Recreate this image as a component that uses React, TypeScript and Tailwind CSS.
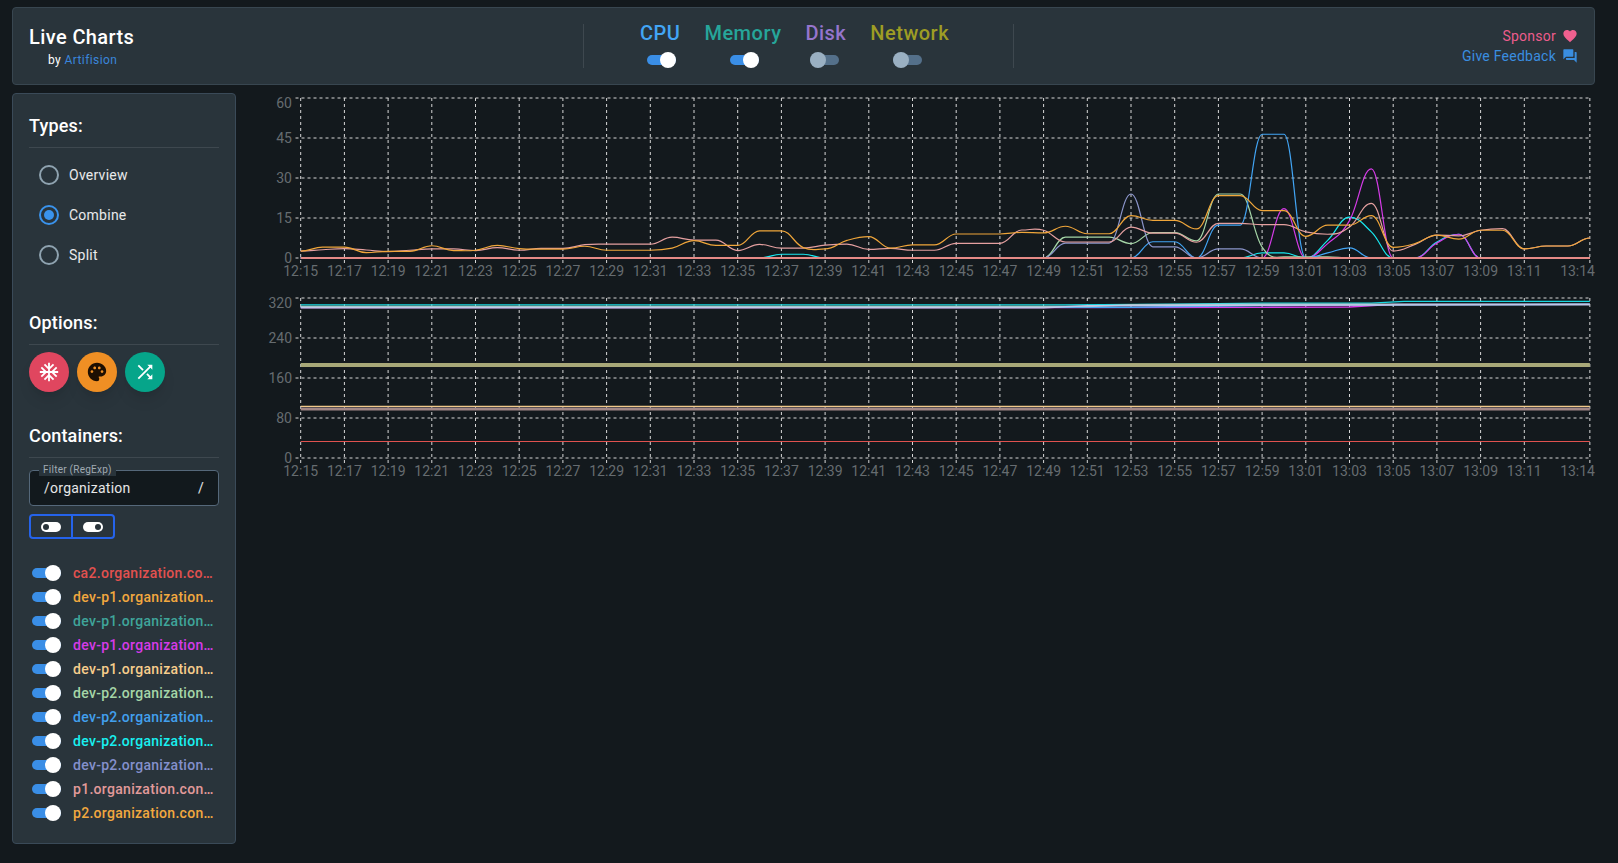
import { MdAcUnit, MdFavorite, MdForum, MdPalette, MdShuffle } from "react-icons/md"

const font = { fontFamily: "Roboto, sans-serif" }

const sparse = (points: Record<number, number>) => Array.from({ length: 60 }, (_, m) => points[m] ?? 0)

const orange = [2.6,4.1,4.1,2,2.5,2.5,4.6,2.8,2.9,4.7,3.5,3.3,3.3,4.4,2.9,2.9,2.9,3.7,6.5,4.7,4.7,10.2,10.2,3.9,3.4,6.6,8,3.7,4.9,4.9,9,9,9,9.6,9.4,11.9,9.1,9.1,15.9,14.1,14.1,10.9,23.4,23.4,17.8,17.8,8.1,12.3,12.3,15.9,4,5.4,8.6,7.1,10.4,10.4,3.4,4.5,4.5,7.5]
const pink = [2.6,3.1,3.5,3,2.4,2.9,3.4,3.4,2.8,3.9,2.9,3.6,3.6,5,5.2,5.2,5.2,7.8,6.7,6.7,2.8,5.1,3.7,3.7,4.8,5.2,3.2,3.6,2.9,2.9,5.5,5.5,5.5,10.5,10.4,6,6,6,11.6,9.3,9.3,5.9,13,13,12.5,12.5,9.8,8.9,11.6,20.5,2.6,5.1,8.6,8.3,10.4,11,3.4,4.5,4.5,7.5]

const cpuSeries = [
  { color: "#18e8f0", data: sparse({ 22: 1.4, 23: 1.4, 44: 1.9, 45: 1.9, 47: 6.6, 48: 15.3, 49: 9.8, 52: 6, 53: 8.9 }) },
  { color: "#d63be8", data: sparse({ 45: 18.5, 47: 5.4, 48: 14, 49: 33.4, 52: 5.6, 53: 8.9 }) },
  { color: "#a5d6a7", data: sparse({ 35: 7.8, 36: 7.8, 37: 7.8, 38: 5.4, 39: 9.5, 40: 9.5, 41: 6.4, 42: 24, 43: 24, 44: 4.1, 45: 0.4, 46: 0.4, 47: 0.4 }) },
  { color: "#42a5f5", data: sparse({ 39: 6.1, 40: 6.1, 42: 12.3, 43: 12.3, 44: 46.4, 45: 46.4, 47: 1.9, 48: 3.8 }) },
  { color: "#8c96cc", data: sparse({ 35: 5.6, 36: 5.6, 37: 5.6, 38: 24, 39: 4.2, 40: 4.2, 42: 3.4, 43: 3.4 }) },
  { color: "#e5a0a0", data: pink },
  { color: "#f0a63a", data: orange },
]

// local x inside the chart svg (which starts at page x 260)
const xOf = (m: number) => 40.7 + m * 21.85

// monotone-ish smoothing, flat tangent at peaks so plateaus stay flat
const smoothPath = (pts: number[][]) => {
  const tangent = pts.map((p, i) => {
    if (i === 0 || i === pts.length - 1) return 0
    const a = p[1] - pts[i - 1][1]
    const b = pts[i + 1][1] - p[1]
    if (a * b <= 0) return 0
    return ((a + b) / 2) / (pts[i + 1][0] - pts[i - 1][0]) * 2
  })
  let d = `M${pts[0][0]} ${pts[0][1]}`
  for (let i = 1; i < pts.length; i++) {
    const h = (pts[i][0] - pts[i - 1][0]) / 2.4
    d += `C${pts[i - 1][0] + h} ${pts[i - 1][1] + tangent[i - 1] * h} ${pts[i][0] - h} ${pts[i][1] - tangent[i] * h} ${pts[i][0]} ${pts[i][1]}`
  }
  return d
}

const timeLabel = (m: number) => {
  const t = 12 * 60 + 15 + m
  return `${Math.floor(t / 60)}:${String(t % 60).padStart(2, "0")}`
}

const Chart = ({ top, height, yLabels, children }: { top: number; height: number; yLabels: string[]; children: React.ReactNode }) => {
  const minutes = Array.from({ length: 29 }, (_, i) => i * 2)
  return (
    <svg width={1358} height={height} className="block" style={font}>
      {yLabels.map((label, i) => {
        const y = top + i * 40
        return (
          <g key={label}>
            <line x1={35.5} x2={1330} y1={y} y2={y} stroke="#d8d8d8" strokeDasharray="3 3" />
            <text x={32} y={y + (i === 0 ? 10 : 5)} textAnchor="end" fontSize={14} fill="#666c70">{label}</text>
          </g>
        )
      })}
      {[...minutes, 59].map(m => (
        <g key={m}>
          <line x1={xOf(m)} x2={xOf(m)} y1={top} y2={top + 165} stroke="#d8d8d8" strokeDasharray="3 3" />
          <text x={m === 59 ? 1335 : xOf(m)} y={top + 178} textAnchor={m === 59 ? "end" : "middle"} fontSize={14} fill="#666c70">{timeLabel(m)}</text>
        </g>
      ))}
      {children}
    </svg>
  )
}

const CpuChart = () => (
  <Chart top={4} height={191} yLabels={["60", "45", "30", "15", "0"]}>
    {cpuSeries.map(s => (
      <path key={s.color} d={smoothPath(s.data.map((v, m) => [xOf(m), 164 - v * 2.667]))} fill="none" stroke={s.color} strokeWidth={1.2} />
    ))}
    <line x1={xOf(0)} x2={1330} y1={164} y2={164} stroke="#e58a86" strokeWidth={2} />
  </Chart>
)

const memoryLines = [
  { color: "#a08686", width: 3, pts: [[0, 124], [59, 124]] },
  { color: "#f0c98a", width: 1.3, pts: [[0, 121.3], [59, 121.3]] },
  { color: "#a8a878", width: 4, pts: [[0, 80], [59, 80]] },
  { color: "#e0524f", width: 1, pts: [[0, 156.5], [59, 156.5]] },
  { color: "#d63be8", width: 1.3, pts: [[0, 22.6], [36, 22.6], [44, 22.3], [48, 22], [50, 19.3], [59, 19.3]] },
  { color: "#42a5f5", width: 1.5, pts: [[0, 22.2], [38, 22.2], [44, 20.6], [49, 19.8], [59, 19.3]] },
  { color: "#18d8e0", width: 1.3, pts: [[0, 19.8], [35, 19.8], [40, 19.2], [44, 18.2], [49, 18.2], [50.5, 16.3], [59, 16.3]] },
  { color: "#a5c8c8", width: 1.5, pts: [[0, 21.5], [36, 21.5], [38, 19.8], [44, 19.2], [50, 19.3], [59, 19.3]] },
  { color: "#c0c6e8", width: 1.6, pts: [[0, 22.7], [34, 22.7], [36, 20.8], [50, 20], [59, 19.6]] },
]

const MemoryChart = () => (
  <Chart top={13} height={200} yLabels={["320", "240", "160", "80", "0"]}>
    {memoryLines.map(l => (
      <polyline key={l.color} points={l.pts.map(p => `${xOf(p[0])},${p[1]}`).join(" ")} fill="none" stroke={l.color} strokeWidth={l.width} />
    ))}
  </Chart>
)

const Toggle = ({ on }: { on: boolean }) => (
  <div className={`relative w-[29px] h-[10px] rounded-full ${on ? "bg-[#3a8ee6]" : "bg-[#54708a]"}`}>
    <div className={`absolute top-[-3px] w-4 h-4 rounded-full ${on ? "left-[13px] bg-white" : "left-0 bg-[#9ab0c2]"}`} />
  </div>
)

const Metric = ({ label, color, on, nudge }: { label: string; color: string; on: boolean; nudge: string }) => (
  <div className="flex flex-col items-center">
    <span className={`text-[20px] leading-7 font-medium tracking-[0.5px] ${color}`}>{label}</span>
    <div className={`mt-2 ${nudge}`}>
      <Toggle on={on} />
    </div>
  </div>
)

const Header = () => (
  <header className="flex items-center w-[1583px] h-[78px] pl-4 pr-4 bg-[#29343b] border border-[#384650] rounded">
    <div className="w-[554px] pb-px">
      <div className="mb-px text-[20px] leading-7 font-medium tracking-[0.4px] text-white">Live Charts</div>
      <div className="ml-[19px] text-xs leading-4 tracking-[0.4px] text-white">by <span className="text-[#3a86dc]">Artifision</span></div>
    </div>
    <div className="w-px h-11 bg-white/10" />
    <div className="flex gap-6 w-[429px] h-full pl-[56px] pt-[11px]">
      <Metric label="CPU" color="text-[#42a5f5]" on nudge="ml-[2px]" />
      <Metric label="Memory" color="text-[#26a69a]" on nudge="ml-[4px]" />
      <Metric label="Disk" color="text-[#9575cd]" on={false} nudge="mr-[2px]" />
      <Metric label="Network" color="text-[#9e9d24]" on={false} nudge="mr-[4px]" />
    </div>
    <div className="w-px h-11 bg-white/10" />
    <div className="flex-1 text-sm leading-5 tracking-[0.25px] text-right">
      <div className="flex items-center justify-end gap-[6px] text-[#ec5c8c]">Sponsor<MdFavorite size={16} className="text-[#f0608f]" /></div>
      <div className="flex items-center justify-end gap-[6px] text-[#3a8ee0]">Give Feedback<MdForum size={16} /></div>
    </div>
  </header>
)

const SectionTitle = ({ children, className }: { children: string; className?: string }) => (
  <div className={className}>
    <div className="text-[18px] leading-6 font-medium tracking-[0.15px] text-white">{children}</div>
    <div className="h-px mt-[9px] bg-white/10" />
  </div>
)

const Radio = ({ label, checked }: { label: string; checked?: boolean }) => (
  <div className="flex items-center h-10 pl-[10px] gap-[10px]">
    <div className={`flex items-center justify-center w-5 h-5 rounded-full border-2 ${checked ? "border-[#3a93ec]" : "border-[#8fa3b0]"}`}>
      {checked && <div className="w-[10px] h-[10px] rounded-full bg-[#3a93ec]" />}
    </div>
    <span className="text-sm tracking-[0.25px] text-white/90">{label}</span>
  </div>
)

const containers = [
  { name: "ca2.organization.container", color: "text-[#e2514f]" },
  { name: "dev-p1.organization.container-1", color: "text-[#f2a83f]" },
  { name: "dev-p1.organization.container-2", color: "text-[#3fa59a]" },
  { name: "dev-p1.organization.container-3", color: "text-[#d63be8]" },
  { name: "dev-p1.organization.container-4", color: "text-[#f7cd8c]" },
  { name: "dev-p2.organization.container-1", color: "text-[#a5d6a7]" },
  { name: "dev-p2.organization.container-2", color: "text-[#42a0ee]" },
  { name: "dev-p2.organization.container-3", color: "text-[#18f0f0]" },
  { name: "dev-p2.organization.container-4", color: "text-[#8490cc]" },
  { name: "p1.organization.container", color: "text-[#e29a9a]" },
  { name: "p2.organization.container", color: "text-[#f2a83f]" },
]

const Sidebar = () => (
  <aside className="w-[224px] h-[751px] pt-5 px-4 bg-[#29343b] border border-[#3a4a58] rounded shrink-0">
    <SectionTitle>Types:</SectionTitle>
    <div className="mt-[7px]">
      <Radio label="Overview" />
      <Radio label="Combine" checked />
      <Radio label="Split" />
    </div>

    <SectionTitle className="mt-9">Options:</SectionTitle>
    <div className="flex gap-2 mt-[7px]">
      <button className="flex items-center justify-center w-10 h-10 rounded-full bg-[#e0465f] text-white shadow-lg"><MdAcUnit size={22} /></button>
      <button className="flex items-center justify-center w-10 h-10 rounded-full bg-[#ef8f24] text-[#1d0f02] shadow-lg"><MdPalette size={22} /></button>
      <button className="flex items-center justify-center w-10 h-10 rounded-full bg-[#06a58a] text-white shadow-lg"><MdShuffle size={22} /></button>
    </div>

    <SectionTitle className="mt-8">Containers:</SectionTitle>
    <div className="relative flex items-center justify-between h-9 mt-3 px-[14px] bg-[#12191d] border border-[#55687a] rounded text-sm tracking-[0.25px] text-white/90">
      <span className="absolute left-[9px] top-[-7px] px-1 text-[10px] leading-3 text-[#a0aab2] bg-[#29343b]">Filter (RegExp)</span>
      <span>/organization</span>
      <span>/</span>
    </div>
    <div className="flex w-[86px] h-[25px] mt-2 border-2 border-[#2563eb] rounded">
      <div className="flex flex-1 items-center justify-center border-r-2 border-[#2563eb]">
        <div className="flex items-center justify-start w-5 h-[10px] pl-[2px] rounded-full bg-white">
          <div className="w-[6px] h-[6px] rounded-full bg-[#29343b]" />
        </div>
      </div>
      <div className="flex flex-1 items-center justify-center">
        <div className="flex items-center justify-end w-5 h-[10px] pr-[2px] rounded-full bg-white">
          <div className="w-[6px] h-[6px] rounded-full bg-[#29343b]" />
        </div>
      </div>
    </div>

    <div className="mt-[22px]">
      {containers.map(c => (
        <div key={c.name} className="flex items-center h-6 pl-[3px]">
          <Toggle on />
          <span className={`w-[142px] ml-[12px] truncate text-sm font-medium tracking-[0.3px] ${c.color}`}>{c.name}</span>
        </div>
      ))}
    </div>
  </aside>
)

const App = () => (
  <div className="min-h-screen pt-[7px] pl-3 bg-[#13191d] overflow-hidden" style={font}>
    <Header />
    <div className="flex mt-2">
      <Sidebar />
      <main className="ml-6 pt-px">
        <CpuChart />
        <MemoryChart />
      </main>
    </div>
  </div>
)

export default App
